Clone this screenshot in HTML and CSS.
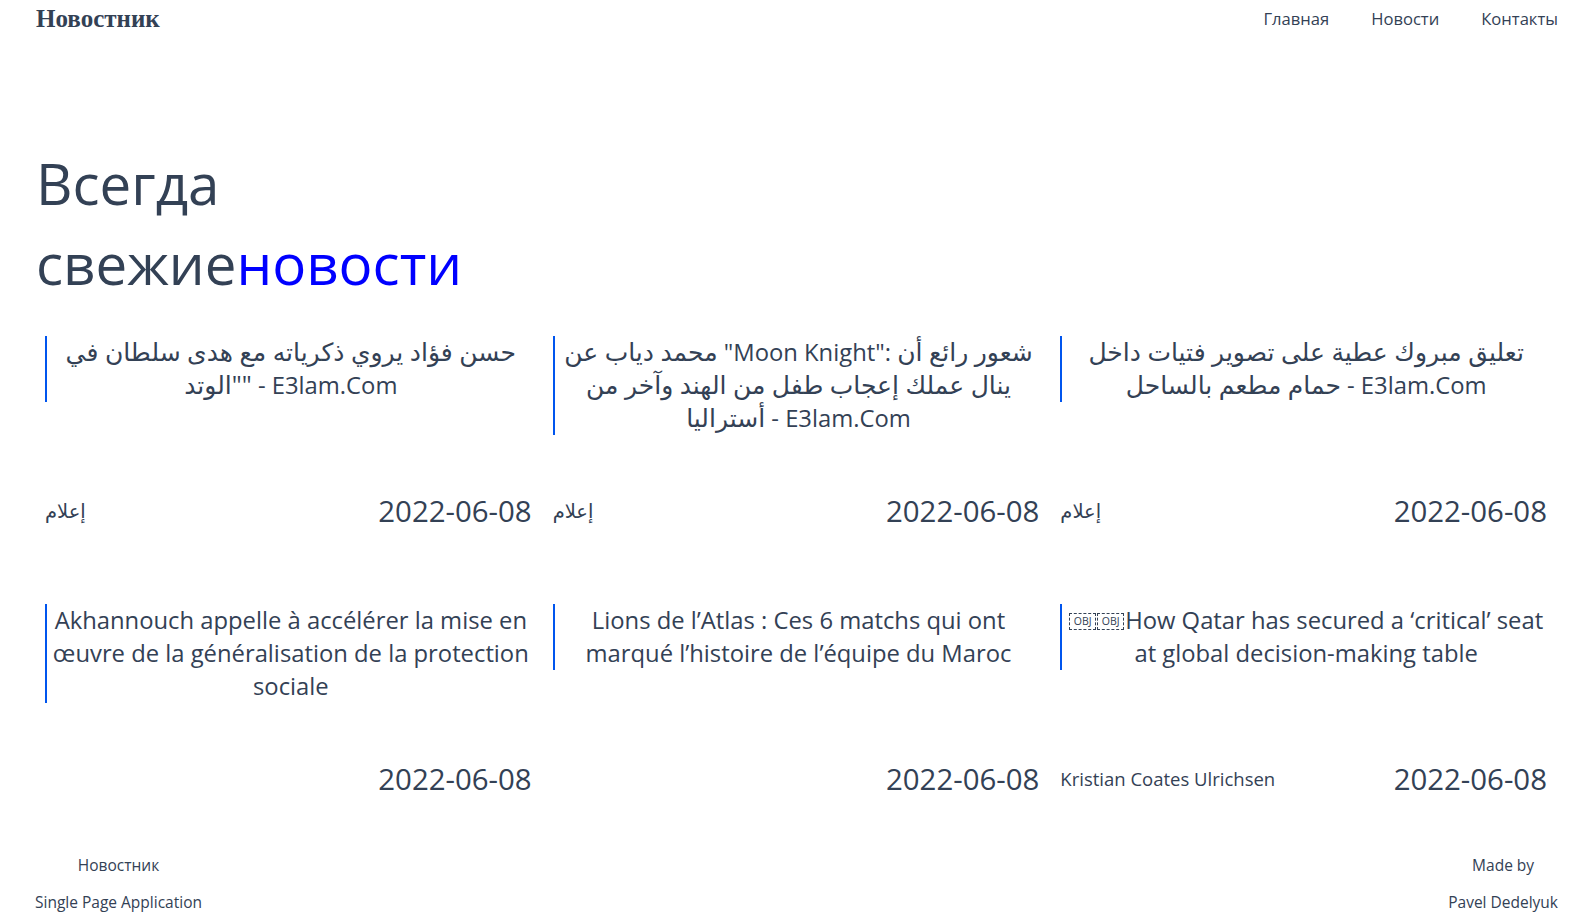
FILE: index.html
```html
<!DOCTYPE html>
<html lang="ru">
<head>
<meta charset="utf-8">
<title>Новостник</title>
<link rel="stylesheet" href="styles.css">
</head>
<body>
<header class="header">
  <div class="logo">Новостник</div>
  <nav class="nav">
    <a class="nav-link" href="#">Главная</a>
    <a class="nav-link" href="#">Новости</a>
    <a class="nav-link" href="#">Контакты</a>
  </nav>
</header>
<main class="main">
  <h1 class="hero">
    <span class="hero-line">Всегда</span>
    <span class="hero-line">свежие<span class="accent">новости</span></span>
  </h1>
  <section class="grid">
    <article class="card">
      <h2 class="card-title"><span class="ar">حسن فؤاد يروي ذكرياته مع هدى سلطان في "الوتد"</span> - E3lam.Com</h2>
      <div class="card-meta"><span class="author author-ar">إعلام</span><span class="date">2022-06-08</span></div>
    </article>
    <article class="card">
      <h2 class="card-title"><span class="ar">محمد دياب عن</span> "Moon Knight": <span class="ar">شعور رائع أن ينال عملك إعجاب طفل من الهند وآخر من أستراليا</span> - E3lam.Com</h2>
      <div class="card-meta"><span class="author author-ar">إعلام</span><span class="date">2022-06-08</span></div>
    </article>
    <article class="card">
      <h2 class="card-title"><span class="ar">تعليق مبروك عطية على تصوير فتيات داخل حمام مطعم بالساحل</span> - E3lam.Com</h2>
      <div class="card-meta"><span class="author author-ar">إعلام</span><span class="date">2022-06-08</span></div>
    </article>
    <article class="card">
      <h2 class="card-title">Akhannouch appelle à accélérer la mise en œuvre de la généralisation de la protection sociale</h2>
      <div class="card-meta"><span class="author"></span><span class="date">2022-06-08</span></div>
    </article>
    <article class="card">
      <h2 class="card-title">Lions de l’Atlas : Ces 6 matchs qui ont marqué l’histoire de l’équipe du Maroc</h2>
      <div class="card-meta"><span class="author"></span><span class="date">2022-06-08</span></div>
    </article>
    <article class="card">
      <h2 class="card-title"><span class="obj">OBJ</span><span class="obj">OBJ</span>How Qatar has secured a ‘critical’ seat at global decision-making table</h2>
      <div class="card-meta"><span class="author">Kristian Coates Ulrichsen</span><span class="date">2022-06-08</span></div>
    </article>
  </section>
</main>
<footer class="footer">
  <div class="footer-col">
    <span>Новостник</span>
    <span>Single Page Application</span>
  </div>
  <div class="footer-col">
    <span>Made by</span>
    <span>Pavel Dedelyuk</span>
  </div>
</footer>
</body>
</html>
```

FILE: styles.css
```css
* { box-sizing: border-box; }

body {
  margin: 0;
  font-family: "Open Sans", "Noto Sans", "DejaVu Sans", sans-serif;
  color: #334155;
  background: #ffffff;
}

.header {
  display: flex;
  justify-content: space-between;
  align-items: center;
  height: 38px;
  padding: 0 16px 0 36px;
}

.logo {
  font-family: "Liberation Serif", "Times New Roman", serif;
  font-weight: 700;
  font-size: 25px;
  line-height: 1;
  margin-top: -2px;
}

.nav {
  display: flex;
  gap: 42px;
}

.nav-link {
  color: #334155;
  text-decoration: none;
  font-size: 16.6px;
  line-height: 22px;
}

.main {
  padding: 0 22px 0 36px;
}

.hero {
  margin: 106px 0 0;
  font-weight: 400;
  font-size: 56.5px;
  line-height: 80px;
}

.hero-line {
  display: block;
}

.accent {
  color: #0000ff;
}

.grid {
  display: grid;
  grid-template-columns: repeat(3, 1fr);
  column-gap: 21px;
  row-gap: 73px;
  margin: 32px 5px 0 9px;
}

.card {
  display: flex;
  flex-direction: column;
}

.card-title {
  margin: 0 0 56px;
  padding-left: 3px;
  border-left: 2px solid #0055ee;
  text-align: center;
  font-weight: 400;
  font-size: 23.8px;
  line-height: 33px;
}

.ar {
  font-size: 25px;
  line-height: 24px;
}

.obj {
  display: inline-block;
  width: 27px;
  height: 17px;
  margin-right: 1px;
  border: 1px dashed #334155;
  font-size: 10.5px;
  line-height: 15px;
  text-align: center;
  vertical-align: 4px;
}

.card-meta {
  margin-top: auto;
  display: flex;
  justify-content: space-between;
  align-items: center;
  height: 40px;
}

.author {
  font-size: 18.5px;
  line-height: 24px;
}

.author-ar {
  font-size: 19.5px;
}

.date {
  font-size: 29.4px;
  line-height: 40px;
}

.footer {
  display: flex;
  justify-content: space-between;
  margin-top: 56px;
  padding: 0 16px 14px 35px;
}

.footer-col {
  display: flex;
  flex-direction: column;
  align-items: center;
  gap: 17px;
  font-size: 15.5px;
  line-height: 20px;
}
```
